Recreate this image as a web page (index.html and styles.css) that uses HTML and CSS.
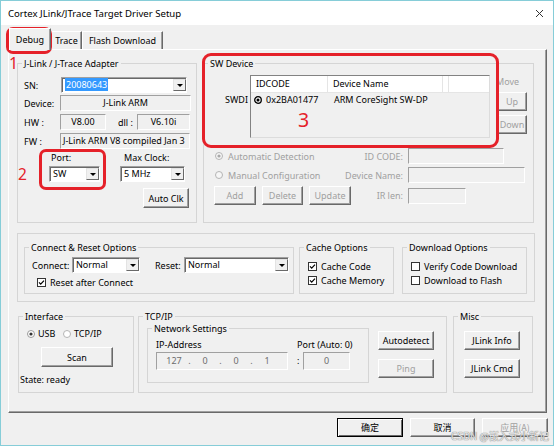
FILE: index.html
```html
<!DOCTYPE html>
<html lang="en">
<head>
  <meta charset="UTF-8">
  <title>Cortex JLink/JTrace Target Driver Setup</title>
  <link rel="stylesheet" href="styles.css">
</head>
<body>
<div class="window">
  <div class="titlebar">
    <span class="title">Cortex JLink/JTrace Target Driver Setup</span>
    <svg class="close" width="7" height="7" viewBox="0 0 7 7"><path d="M0 0L7 7M7 0L0 7" stroke="#333" stroke-width="1"/></svg>
  </div>

  <div class="tabs">
    <div class="tab tab-debug active">Debug</div>
    <div class="tab tab-trace">Trace</div>
    <div class="tab tab-flash">Flash Download</div>
  </div>

  <div class="panel">
    <div class="top-row">
      <!-- adapter -->
      <div class="group adapter">
        <div class="group-title">J-Link / J-Trace Adapter</div>
        <div class="frow sn-row">
          <span class="flabel">SN:</span>
          <div class="combo sn-combo">
            <span class="combo-text"><span class="selected">20080643</span></span>
            <span class="combo-btn"></span>
          </div>
        </div>
        <div class="frow dev-row">
          <span class="flabel">Device:</span>
          <div class="ro-field dev-field">J-Link ARM</div>
        </div>
        <div class="frow hw-row">
          <span class="flabel">HW :</span>
          <div class="ro-field hw-field">V8.00</div>
          <span class="dll-label">dll :</span>
          <div class="ro-field dll-field">V6.10i</div>
        </div>
        <div class="frow fw-row">
          <span class="flabel">FW :</span>
          <div class="ro-field fw-field">J-Link ARM V8 compiled Jan 3</div>
        </div>
        <div class="clock-row">
          <div class="port-col">
            <div class="port-label">Port:</div>
            <div class="combo port-combo"><span class="combo-text">SW</span><span class="combo-btn"></span></div>
          </div>
          <div class="clock-col">
            <div class="clock-label">Max Clock:</div>
            <div class="combo clock-combo"><span class="combo-text">5 MHz</span><span class="combo-btn"></span></div>
          </div>
        </div>
        <button class="btn autoclk-btn">Auto Clk</button>
      </div>

      <!-- sw device -->
      <div class="group sw-device">
        <div class="group-title">SW Device</div>
        <div class="swd-row">
          <span class="swd-label">SWDI</span>
          <div class="list">
            <div class="list-head">
              <span class="col-id">IDCODE</span>
              <span class="col-name">Device Name</span>
              <span class="col-rest"></span>
            </div>
            <div class="list-item">
              <span class="col-id">
                <svg class="list-radio" width="8" height="8" viewBox="0 0 8 8"><circle cx="4" cy="4" r="3.3" fill="none" stroke="#000" stroke-width="1.3"/><circle cx="4" cy="4" r="1.5" fill="#000"/></svg>
                0x2BA01477
              </span>
              <span class="col-name">ARM CoreSight SW-DP</span>
            </div>
          </div>
          <div class="move-col">
            <div class="move-label">Move</div>
            <button class="btn move-btn disabled">Up</button>
            <button class="btn move-btn disabled">Down</button>
          </div>
        </div>
        <div class="detect">
          <span class="radio-item disabled">
            <svg width="8" height="8" viewBox="0 0 8 8"><circle cx="4" cy="4" r="3.5" fill="#f6f6f6" stroke="#b4b4b4"/><circle cx="4" cy="4" r="1.6" fill="#a8a8a8"/></svg>
            Automatic Detection
          </span>
          <span class="detect-label disabled">ID CODE:</span>
          <div class="field id-field"></div>

          <span class="radio-item disabled">
            <svg width="8" height="8" viewBox="0 0 8 8"><circle cx="4" cy="4" r="3.5" fill="#f6f6f6" stroke="#b4b4b4"/></svg>
            Manual Configuration
          </span>
          <span class="detect-label disabled">Device Name:</span>
          <div class="field name-field"></div>

          <div class="detect-btns">
            <button class="btn add-btn disabled">Add</button>
            <button class="btn del-btn disabled">Delete</button>
            <button class="btn upd-btn disabled">Update</button>
          </div>
          <span class="detect-label disabled">IR len:</span>
          <div class="field ir-field"></div>
        </div>
      </div>
    </div>

    <div class="options">
      <div class="group connect">
        <div class="group-title">Connect &amp; Reset Options</div>
        <div class="connect-row">
          <span class="connect-label">Connect:</span>
          <div class="combo connect-combo"><span class="combo-text">Normal</span><span class="combo-btn"></span></div>
          <span class="reset-label">Reset:</span>
          <div class="combo reset-combo"><span class="combo-text">Normal</span><span class="combo-btn"></span></div>
        </div>
        <div class="check-item reset-check">
          <svg class="check" width="9" height="9" viewBox="0 0 9 9"><rect x="0.5" y="0.5" width="8" height="8" fill="#fff" stroke="#333"/><path d="M2 4.4L3.7 6.2L7 2.6" fill="none" stroke="#000" stroke-width="1.2"/></svg>
          Reset after Connect
        </div>
      </div>
      <div class="group cache">
        <div class="group-title">Cache Options</div>
        <div class="check-list">
          <div class="check-item">
            <svg class="check" width="9" height="9" viewBox="0 0 9 9"><rect x="0.5" y="0.5" width="8" height="8" fill="#fff" stroke="#333"/><path d="M2 4.4L3.7 6.2L7 2.6" fill="none" stroke="#000" stroke-width="1.2"/></svg>
            Cache Code
          </div>
          <div class="check-item">
            <svg class="check" width="9" height="9" viewBox="0 0 9 9"><rect x="0.5" y="0.5" width="8" height="8" fill="#fff" stroke="#333"/><path d="M2 4.4L3.7 6.2L7 2.6" fill="none" stroke="#000" stroke-width="1.2"/></svg>
            Cache Memory
          </div>
        </div>
      </div>
      <div class="group download">
        <div class="group-title">Download Options</div>
        <div class="check-list">
          <div class="check-item">
            <svg class="check" width="9" height="9" viewBox="0 0 9 9"><rect x="0.5" y="0.5" width="8" height="8" fill="#fff" stroke="#333"/></svg>
            Verify Code Download
          </div>
          <div class="check-item">
            <svg class="check" width="9" height="9" viewBox="0 0 9 9"><rect x="0.5" y="0.5" width="8" height="8" fill="#fff" stroke="#333"/></svg>
            Download to Flash
          </div>
        </div>
      </div>
    </div>

    <div class="bottom-row">
      <div class="group interface">
        <div class="group-title">Interface</div>
        <div class="iface-radios">
          <span class="radio-item usb">
            <svg width="8" height="8" viewBox="0 0 8 8"><circle cx="4" cy="4" r="3.5" fill="#fff" stroke="#9a9a9a"/><circle cx="4" cy="4" r="1.6" fill="#333"/></svg>
            USB
          </span>
          <span class="radio-item">
            <svg width="8" height="8" viewBox="0 0 8 8"><circle cx="4" cy="4" r="3.5" fill="#fff" stroke="#b4b4b4"/></svg>
            TCP/IP
          </span>
        </div>
        <button class="btn scan-btn">Scan</button>
        <div class="state">State: ready</div>
      </div>

      <div class="group tcpip">
        <div class="group-title">TCP/IP</div>
        <div class="tcp-body">
          <div class="group net">
            <div class="group-title">Network Settings</div>
            <div class="net-grid">
              <span class="ip-label">IP-Address</span>
              <span class="port-label2">Port (Auto: 0)</span>
              <div class="field ip-field">
                <span class="ip-part">127</span><span class="ip-dot">.</span><span class="ip-part">0</span><span class="ip-dot">.</span><span class="ip-part">0</span><span class="ip-dot">.</span><span class="ip-part">1</span>
              </div>
              <span class="colon">:</span>
              <div class="field port-field">0</div>
            </div>
          </div>
          <div class="btn-col tcp-btns">
            <button class="btn">Autodetect</button>
            <button class="btn disabled">Ping</button>
          </div>
        </div>
      </div>

      <div class="group misc">
        <div class="group-title">Misc</div>
        <div class="btn-col misc-btns">
          <button class="btn">JLink Info</button>
          <button class="btn">JLink Cmd</button>
        </div>
      </div>
    </div>
  </div>

  <div class="dialog-buttons">
    <button class="btn default-btn">确定</button>
    <button class="btn cancel-btn">取消</button>
    <button class="btn apply-btn disabled">应用(A)</button>
  </div>

  <!-- red annotations drawn over the dialog -->
  <div class="mark mark-tab"></div>
  <div class="mark mark-port"></div>
  <div class="mark mark-sw"></div>
  <span class="mark-num num-1">1</span>
  <span class="mark-num num-2">2</span>
  <span class="mark-num num-3">3</span>

  <span class="watermark">CSDN @嵌入式小新记</span>
</div>
</body>
</html>
```

FILE: styles.css
```css
* {
  box-sizing: border-box;
}

body {
  margin: 0;
  font-family: "Noto Sans", "Noto Sans CJK SC", sans-serif;
  font-size: 9px;
  line-height: 13px;
  color: #000;
  background: #fff;
}

button {
  font: inherit;
  color: inherit;
}

.window {
  position: relative;
  width: 554px;
  height: 446px;
  border: 1px solid #86cdd8;
  background: #f0f0f0;
  overflow: hidden;
}

/* Title bar */
.titlebar {
  height: 24px;
  display: flex;
  align-items: center;
  justify-content: space-between;
  padding: 0 10px 0 7px;
  background: #fff;
  font-size: 9.6px;
}

/* Tabs */
.tabs {
  display: flex;
  align-items: flex-end;
  height: 24px;
  padding-left: 8px;
}

.tab {
  height: 18px;
  line-height: 17px;
  text-align: center;
  border-top: 1px solid #fff;
  border-left: 1px solid #fff;
  border-right: 1px solid #696969;
  box-shadow: inset -1px 0 #a0a0a0;
}

.tab-debug { width: 42px; }
.tab-trace { width: 31px; }
.tab-flash { width: 81px; }

.tab.active {
  position: relative;
  z-index: 1;
  height: 22px;
  line-height: 21px;
  margin-bottom: -1px;
  background: #f0f0f0;
}

.panel {
  margin-left: 7px;
  width: 539px;
  height: 364px;
  border-top: 1px solid #fff;
  border-left: 1px solid #fff;
  border-right: 1px solid #696969;
  border-bottom: 1px solid #696969;
  box-shadow: inset -1px -1px #a0a0a0;
}

/* Group boxes */
.group {
  flex: none;
  border: 1px solid #d5d5d5;
}

.group-title {
  width: max-content;
  margin: -7px 0 0 4px;
  padding: 0 2px;
  background: #f0f0f0;
  line-height: 13px;
}

/* Common controls */
.btn {
  display: block;
  padding: 0;
  background: #f0f0f0;
  border: 1px solid;
  border-color: #fff #696969 #696969 #fff;
  box-shadow: inset -1px -1px #a0a0a0;
  line-height: 15px;
  white-space: nowrap;
}

.disabled {
  color: #a0a0a0;
}

.combo {
  display: flex;
  height: 16px;
  background: #fff;
  border: 1px solid;
  border-color: #a0a0a0 #fff #fff #a0a0a0;
  box-shadow: inset 1px 1px #696969;
}

.combo-text {
  flex: 1;
  padding: 0 2px 0 3px;
  line-height: 14px;
  white-space: nowrap;
  overflow: hidden;
}

.combo-btn {
  display: flex;
  align-items: center;
  justify-content: center;
  width: 13px;
  margin: 1px 0;
  background: #f0f0f0;
  border: 1px solid;
  border-color: #e3e3e3 #696969 #696969 #e3e3e3;
}

.combo-btn::after {
  content: "";
  border-top: 3px solid #000;
  border-left: 3px solid transparent;
  border-right: 3px solid transparent;
}

.selected {
  padding: 0 1px;
  background: #3399ff;
  color: #fff;
}

.ro-field,
.field {
  height: 16px;
  border: 1px solid;
  border-color: #a0a0a0 #fff #fff #a0a0a0;
  background: #f0f0f0;
  line-height: 14px;
  padding: 0 3px;
  white-space: nowrap;
  overflow: hidden;
}

.radio-item,
.check-item {
  display: flex;
  align-items: center;
  gap: 4px;
  white-space: nowrap;
}

.radio-item svg,
.check-item svg {
  flex: none;
}

/* Top row */
.top-row {
  display: flex;
  gap: 6px;
  padding: 13px 0 0 8px;
}

.adapter {
  width: 180px;
  height: 160px;
}

.frow {
  display: flex;
  align-items: center;
  padding-left: 6px;
}

.flabel {
  width: 36px;
  flex: none;
}

.sn-row { margin-top: 7px; }
.sn-combo { width: 126px; margin-left: 1px; }
.dev-row { margin-top: 2px; }
.dev-field { width: 131px; text-align: center; }
.hw-row, .fw-row { margin-top: 3px; }
.hw-field { width: 46px; text-align: center; }
.dll-label { width: 19px; margin-left: 12px; }
.dll-field { width: 53px; text-align: center; }
.fw-field { width: 130px; padding-left: 2px; }

.clock-row {
  display: flex;
  gap: 20px;
  margin: 2px 0 0 31px;
}

.port-label { padding-left: 2px; margin-bottom: 2px; }
.port-combo { width: 51px; }
.clock-label { padding-left: 4px; margin-bottom: 2px; }
.clock-combo { width: 65px; }

.autoclk-btn {
  width: 46px;
  height: 20px;
  margin: 6px 0 0 125px;
}

.sw-device {
  width: 331px;
  height: 160px;
}

.swd-row {
  display: flex;
  align-items: flex-start;
  margin-top: 5px;
}

.swd-label {
  width: 44px;
  margin-right: 2px;
  padding-top: 18px;
  text-align: right;
}

.list {
  width: 240px;
  height: 63px;
  border: 1px solid;
  border-color: #828282 #dcdcdc #dcdcdc #828282;
  background: #f0f0f0;
}

.list-head {
  display: flex;
  height: 17px;
  line-height: 16px;
  background: #fff;
  border-bottom: 1px solid #e5e5e5;
}

.list-head span {
  border-right: 1px solid #e5e5e5;
  padding-left: 5px;
}

.col-id { width: 77px; }
.col-name { width: 115px; }

.list-item {
  display: flex;
  line-height: 13px;
}

.list-item .col-id {
  display: flex;
  align-items: center;
  gap: 4px;
  padding-left: 3px;
}

.list-item .col-name { padding-left: 6px; }

.move-col {
  width: 31px;
  margin-left: 7px;
}

.move-label {
  margin-left: -1px;
  color: #a0a0a0;
}

.move-btn {
  width: 30px;
  height: 19px;
  margin-top: 4px;
}

.detect {
  display: grid;
  grid-template-columns: 141px 48px auto;
  grid-template-rows: 16px 16px 19px;
  row-gap: 3px;
  align-items: center;
  margin-top: 10px;
  padding-left: 10px;
}

.detect .radio-item {
  gap: 5px;
  padding-left: 1px;
}

.detect-label {
  justify-self: end;
  white-space: nowrap;
}

.detect .field { margin-left: 5px; }
.id-field { width: 96px; }
.name-field { width: 117px; }
.ir-field { width: 58px; }

.detect-btns {
  display: flex;
  gap: 6px;
  height: 19px;
}

.add-btn { width: 42px; }
.del-btn { width: 41px; }
.upd-btn { width: 42px; }

/* Connect / cache / download */
.options {
  display: flex;
  width: 518px;
  height: 69px;
  margin: 10px 0 0 8px;
  padding: 13px 0 0 6px;
  border: 1px solid #d5d5d5;
}

.options .group { height: 47px; }
.connect { width: 270px; margin-right: 5px; }
.cache { width: 95px; margin-right: 8px; }
.download { width: 125px; }

.connect-row {
  display: flex;
  align-items: center;
  margin-top: 3px;
  padding-left: 7px;
}

.connect-label { width: 40px; }
.connect-combo { width: 68px; }
.reset-label { width: 29px; margin-left: 15px; }
.reset-combo { width: 105px; }

.reset-check {
  height: 13px;
  margin-top: 3px;
  padding-left: 12px;
}

.check-list {
  margin-top: 5px;
  padding-left: 8px;
}

.check-list .check-item { height: 14px; }

/* Interface / TCP / Misc */
.bottom-row {
  display: flex;
  margin: 14px 0 0 9px;
}

.bottom-row > .group { height: 77px; }
.interface { width: 116px; margin-right: 4px; }
.tcpip { width: 309px; margin-right: 6px; }
.misc { width: 80px; }

.iface-radios {
  display: flex;
  margin-top: 4px;
  padding-left: 8px;
}

.iface-radios .radio-item { gap: 3px; }
.usb { width: 36px; }

.scan-btn {
  width: 72px;
  height: 20px;
  margin: 7px 0 0 22px;
}

.state {
  margin-top: 6px;
  padding-left: 1px;
}

.tcp-body {
  display: flex;
  align-items: flex-start;
}

.net {
  width: 222px;
  height: 55px;
  margin: 5px 0 0 8px;
}

.net-grid {
  display: grid;
  grid-template-columns: 132px 15px 47px;
  grid-template-rows: 13px 18px;
  row-gap: 1px;
  margin-top: 3px;
  padding-left: 8px;
}

.port-label2 {
  grid-column: 2 / 4;
  margin-left: 9px;
  white-space: nowrap;
}

.colon {
  padding-left: 9px;
  line-height: 18px;
}

.ip-field {
  display: flex;
  height: 18px;
  line-height: 16px;
  padding-left: 5px;
  color: #6d6d6d;
}

.ip-part { width: 24px; text-align: center; }
.ip-dot { width: 7px; text-align: center; }

.port-field {
  height: 18px;
  line-height: 16px;
  text-align: center;
  color: #6d6d6d;
}

.btn-col {
  display: flex;
  flex-direction: column;
  gap: 9px;
}

.btn-col .btn {
  width: 56px;
  height: 19px;
}

.tcp-btns { margin: 8px 0 0 9px; }
.misc-btns { margin: 8px 0 0 10px; }

/* Dialog buttons */
.dialog-buttons {
  display: flex;
  justify-content: flex-end;
  gap: 7px;
  margin-top: 5px;
  padding-right: 5px;
}

.dialog-buttons .btn {
  width: 66px;
  height: 19px;
  font-family: "Noto Sans CJK SC", sans-serif;
}

.dialog-buttons .cancel-btn { width: 65px; }

.default-btn {
  border-color: #000;
  box-shadow: inset 1px 1px #fff, inset -1px -1px #696969;
}

/* Red annotations */
.mark {
  position: absolute;
  border: 3px solid #e52129;
  border-radius: 7px;
}

.mark-tab { left: 5px; top: 26px; width: 46px; height: 27px; }
.mark-port { left: 38px; top: 148px; width: 67px; height: 41px; }
.mark-sw { left: 201px; top: 52px; width: 297px; height: 95px; border-radius: 9px; }

.mark-num {
  position: absolute;
  color: #e52129;
  line-height: 1;
}

.num-1 { left: 8px; top: 54px; font-size: 16px; }
.num-2 { left: 17px; top: 166px; font-size: 15.5px; }
.num-3 { left: 297px; top: 109px; font-size: 19.5px; }

.watermark {
  position: absolute;
  right: 4px;
  bottom: 3px;
  font-family: "Noto Sans CJK SC", sans-serif;
  font-size: 10px;
  line-height: 12px;
  color: rgba(255, 255, 255, 0.85);
  text-shadow: 0 0 1px #777, 0 0 1px #777;
}
```
